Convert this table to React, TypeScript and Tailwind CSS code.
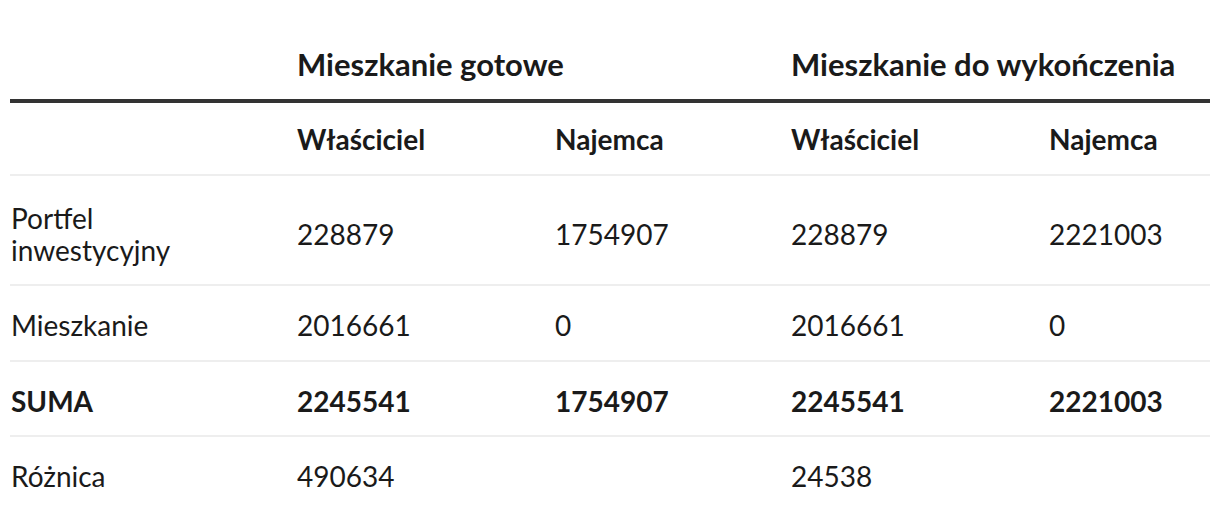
import React from "react";

const rows = [
  { label: "Portfel\ninwestycyjny", v: ["228879", "1754907", "228879", "2221003"], bold: false, h: "h-[110px]", pt: "pt-[8px]" },
  { label: "Mieszkanie", v: ["2016661", "0", "2016661", "0"], bold: false, h: "h-[76px]", pt: "pt-[4px]" },
  { label: "SUMA", v: ["2245541", "1754907", "2245541", "2221003"], bold: true, h: "h-[75px]", pt: "pt-[4px]" },
  { label: "Różnica", v: ["490634", "", "24538", ""], bold: false, h: "h-[76px]", pt: "pt-[2px]" },
];

export default function App() {
  return (
    <div className="w-[1220px] h-[524px] bg-white overflow-hidden px-[10px] text-[#1a1a1a]" style={{ fontFamily: "Lato, 'Noto Sans', sans-serif" }}>
      <table className="w-[1200px] table-fixed border-collapse text-[28px] leading-[32px]">
        <colgroup>
          <col className="w-[285px]" />
          <col className="w-[258px]" />
          <col className="w-[236px]" />
          <col className="w-[258px]" />
          <col className="w-[163px]" />
        </colgroup>
        <thead>
          <tr className="h-[101px] border-b-4 border-[#333333]">
            <th></th>
            <th colSpan={2} className="text-left align-bottom pl-[2px] pb-[17px] text-[31px] leading-[36px] font-bold">Mieszkanie gotowe</th>
            <th colSpan={2} className="text-left align-bottom pl-[2px] pb-[17px] text-[31px] leading-[36px] font-bold whitespace-nowrap">Mieszkanie do wykończenia</th>
          </tr>
          <tr className="h-[74px] border-b-2 border-[#eeeeee]">
            <th></th>
            <th className="text-left pl-[2px] font-bold">Właściciel</th>
            <th className="text-left pl-[2px] font-bold">Najemca</th>
            <th className="text-left pl-[2px] font-bold">Właściciel</th>
            <th className="text-left pl-[2px] font-bold">Najemca</th>
          </tr>
        </thead>
        <tbody>
          {rows.map((r, i) => (
            <tr key={i} className={`${r.h} ${i < rows.length - 1 ? "border-b-2 border-[#eeeeee]" : ""} ${r.bold ? "font-bold" : ""}`}>
              <td className={`pl-[1px] ${r.pt} whitespace-pre-line align-middle`}>{r.label}</td>
              {r.v.map((x, j) => (
                <td key={j} className={`pl-[2px] ${r.pt} align-middle`}>{x}</td>
              ))}
            </tr>
          ))}
        </tbody>
      </table>
    </div>
  );
}
